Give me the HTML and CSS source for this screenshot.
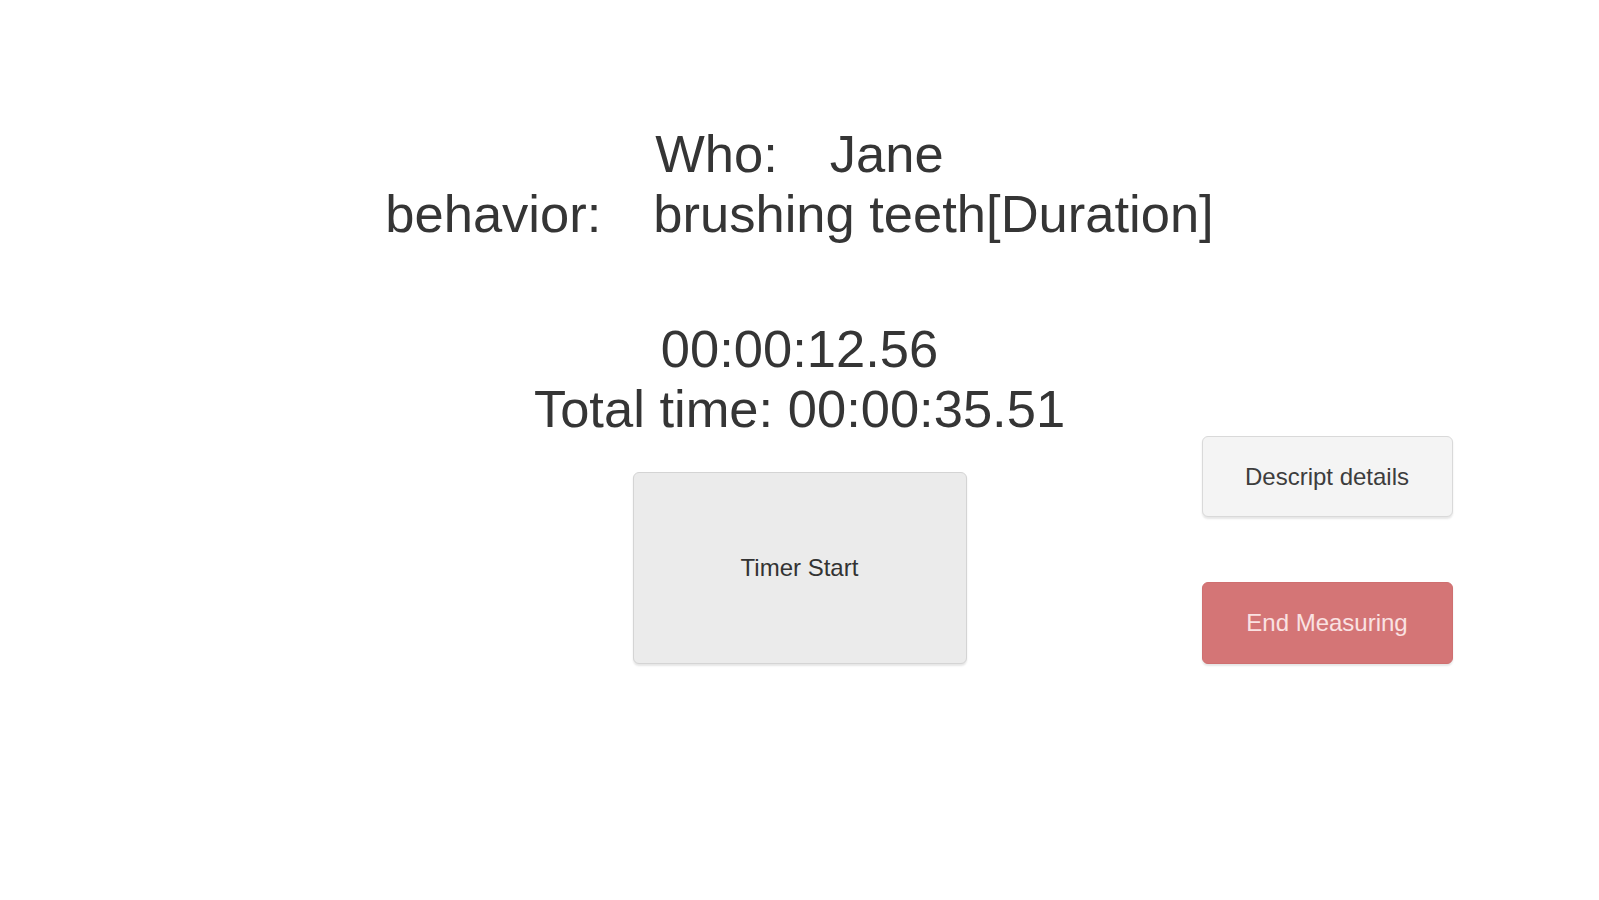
FILE: index.html
```html
<!DOCTYPE html>
<html lang="en">
<head>
<meta charset="utf-8">
<title>Measuring</title>
<link rel="stylesheet" href="styles.css">
</head>
<body>
<main class="screen">
  <section class="info">
    <p class="line"><span class="label">Who:</span><span class="value">Jane</span></p>
    <p class="line"><span class="label">behavior:</span><span class="value">brushing teeth[Duration]</span></p>
  </section>
  <section class="clock">
    <p class="line">00:00:12.56</p>
    <p class="line">Total time: 00:00:35.51</p>
  </section>
  <div class="controls">
    <div class="filler"></div>
    <div class="center">
      <button class="btn btn-timer" type="button">Timer Start</button>
    </div>
    <div class="side">
      <button class="btn btn-details" type="button">Descript details</button>
      <button class="btn btn-end" type="button">End Measuring</button>
    </div>
  </div>
</main>
</body>
</html>
```
FILE: styles.css
```css
html, body {
  margin: 0;
  padding: 0;
  background: #ffffff;
}

body {
  font-family: "Liberation Sans", Arial, sans-serif;
  color: #353535;
  width: 1599px;
  height: 900px;
  overflow: hidden;
}

.screen {
  padding-top: 124px;
}

.line {
  margin: 0;
  font-size: 52.5px;
  line-height: 60px;
  text-align: center;
  white-space: nowrap;
}

.value {
  margin-left: 52px;
}

.clock {
  margin-top: 75px;
}

.controls {
  display: grid;
  grid-template-columns: 1fr 334px 1fr;
}

.center {
  padding-top: 33px;
}

.side {
  display: flex;
  flex-direction: column;
  gap: 65px;
  margin-top: -3px;
  padding-left: 235px;
}

.btn {
  font-family: "Liberation Sans", Arial, sans-serif;
  font-size: 24px;
  border-radius: 6px;
  border: 1px solid #d4d4d4;
  padding: 0;
  margin: 0;
  box-shadow: 0 2px 2px rgba(0, 0, 0, 0.10);
  cursor: pointer;
}

.btn-timer {
  width: 334px;
  height: 192px;
  background: #ebebeb;
  color: #333333;
}

.btn-details {
  width: 251px;
  height: 81px;
  background: #f4f4f4;
  border-color: #d9d9d9;
  color: #3d3d3d;
}

.btn-end {
  width: 251px;
  height: 82px;
  background: #d47576;
  border-color: #cf6f70;
  color: #fae2e2;
}
```
